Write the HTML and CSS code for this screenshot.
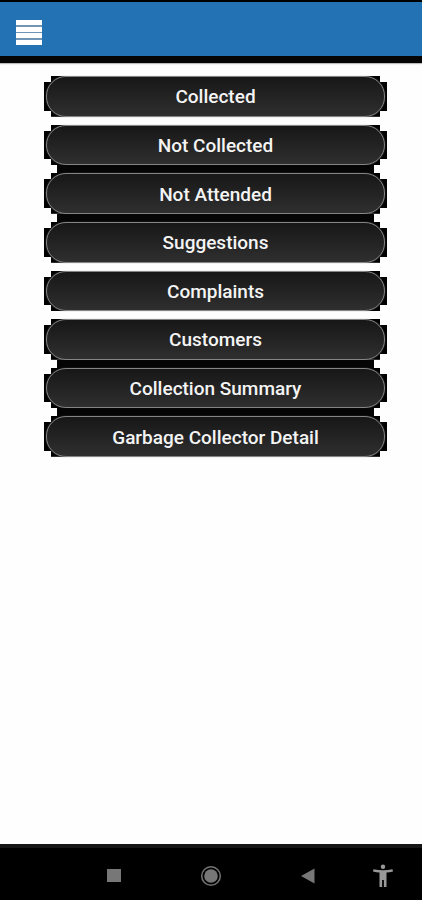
FILE: index.html
```html
<!DOCTYPE html>
<html lang="en">
<head>
<meta charset="utf-8">
<meta name="viewport" content="width=device-width, initial-scale=1">
<title>Collection Menu</title>
<link rel="stylesheet" href="styles.css">
</head>
<body>
<header class="topbar">
  <button class="menu-toggle" type="button" aria-label="Open menu">
    <svg viewBox="0 0 26 25" width="26" height="25" aria-hidden="true">
      <path class="menu-shade" d="M0 2h26v22H0z"/>
      <path class="menu-lines" d="M0 0h26v5H0zM0 7h26v5H0zM0 13h26v5H0zM0 20h26v5H0z"/>
    </svg>
  </button>
</header>
<main class="content">
  <nav class="menu">
    <button class="item" type="button"><span class="pill">Collected</span></button>
    <button class="item joined" type="button"><span class="pill">Not Collected</span></button>
    <button class="item joined" type="button"><span class="pill">Not Attended</span></button>
    <button class="item" type="button"><span class="pill">Suggestions</span></button>
    <button class="item" type="button"><span class="pill">Complaints</span></button>
    <button class="item joined" type="button"><span class="pill">Customers</span></button>
    <button class="item joined" type="button"><span class="pill">Collection Summary</span></button>
    <button class="item" type="button"><span class="pill">Garbage Collector Detail</span></button>
  </nav>
</main>
<footer class="navbar">
  <button class="nav-button" type="button" aria-label="Recent apps">
    <svg viewBox="0 0 24 24" width="24" height="24" aria-hidden="true"><path fill="#777" d="M5 5h14v13H5z"/></svg>
  </button>
  <button class="nav-button" type="button" aria-label="Home">
    <svg viewBox="0 0 24 24" width="24" height="24" aria-hidden="true"><circle cx="12" cy="12" r="9.3" fill="none" stroke="#737373" stroke-width="1.5"/><circle cx="12" cy="12" r="6.8" fill="#777"/></svg>
  </button>
  <button class="nav-button" type="button" aria-label="Back">
    <svg viewBox="0 0 24 24" width="24" height="24" aria-hidden="true"><path fill="#777" d="M5 12L18.500 4.500v15z"/></svg>
  </button>
  <button class="nav-button" type="button" aria-label="Accessibility">
    <svg viewBox="0 0 24 24" width="24" height="24" aria-hidden="true"><circle cx="12" cy="2.800" r="2.200" fill="#999"/><path fill="#999" d="M2.500 5.300Q12 7.200 21.500 5.300L22 7.400Q18.500 8.300 15.500 8.600V23H12.900V16H11.100V23H8.500V8.600Q5.500 8.300 2 7.400z"/></svg>
  </button>
</footer>
</body>
</html>
```
FILE: styles.css
```css
* {
  box-sizing: border-box;
}

body {
  margin: 0;
  min-height: 100vh;
  display: flex;
  flex-direction: column;
  background: #fefefe;
  font-family: Roboto, "Liberation Sans", sans-serif;
}

button {
  margin: 0;
  padding: 0;
  border: 0;
  background: none;
  font: inherit;
  cursor: pointer;
}

.topbar {
  display: flex;
  align-items: center;
  height: 63px;
  padding: 0 16px;
  background: #2372b3;
  border-top: 2px solid #000;
  border-bottom: 7px solid #050505;
  box-shadow: 0 1px 1px #bbb;
}

.menu-toggle {
  display: flex;
  margin-top: 6px;
}

.menu-shade {
  fill: #7195b5;
}

.menu-lines {
  fill: #fff;
}

.content {
  flex: 1;
  padding: 13px 35px 13px 44px;
}

.menu {
  display: grid;
  grid-template-rows: repeat(8, 1fr);
  gap: 8px;
  height: 381px;
}

.item {
  position: relative;
  display: flex;
  padding: 0 2px;
  background:
    linear-gradient(#000, #000) center / calc(100% - 14px) 100% no-repeat,
    linear-gradient(#000, #000) center / 100% calc(100% - 12px) no-repeat;
}

/* Dark bridge filling the gap below a joined item. */
.joined::after {
  content: "";
  position: absolute;
  top: 100%;
  left: 13px;
  right: 13px;
  height: 8px;
  background: #050505;
}

.pill {
  flex: 1;
  display: flex;
  align-items: center;
  justify-content: center;
  padding-top: 2px;
  border: 1px solid #858585;
  border-radius: 20px;
  background: linear-gradient(#171717, #2f2f2f);
  box-shadow: 0 0 1px #777;
  color: #f4f4f4;
  font-size: 19px;
  font-weight: 500;
  line-height: 24px;
}

.navbar {
  display: flex;
  align-items: center;
  justify-content: flex-end;
  gap: 73px;
  height: 56px;
  padding: 3px 27px 0 0;
  background: #000;
  border-top: 4px solid #161616;
}

.nav-button {
  display: flex;
}

.nav-button:last-child {
  margin-left: -22px;
}
```
